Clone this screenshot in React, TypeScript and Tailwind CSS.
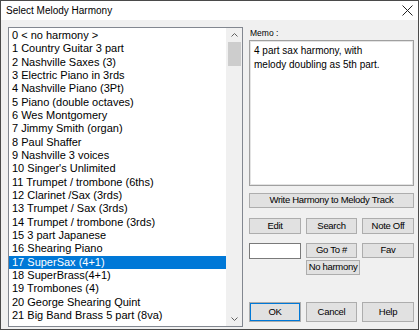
import React from "react";

const items = [
  "0 < no harmony >",
  "1 Country Guitar 3 part",
  "2 Nashville Saxes (3)",
  "3 Electric Piano in 3rds",
  "4 Nashville Piano (3Pt)",
  "5 Piano (double octaves)",
  "6 Wes Montgomery",
  "7 Jimmy Smith (organ)",
  "8 Paul Shaffer",
  "9 Nashville 3 voices",
  "10 Singer's Unlimited",
  "11 Trumpet / trombone (6ths)",
  "12 Clarinet /Sax (3rds)",
  "13 Trumpet / Sax (3rds)",
  "14 Trumpet / trombone (3rds)",
  "15 3 part Japanese",
  "16 Shearing Piano",
  "17 SuperSax (4+1)",
  "18 SuperBrass(4+1)",
  "19 Trombones (4)",
  "20 George Shearing Quint",
  "21 Big Band Brass 5 part (8va)",
];

const selected = 17;

function Btn({ children, className = "" }: { children: React.ReactNode; className?: string }) {
  return (
    <div
      className={`flex items-center justify-center bg-[#e1e1e1] border border-[#adadad] text-[9.5px] tracking-[-0.3px] text-black ${className}`}
    >
      {children}
    </div>
  );
}

export default function App() {
  return (
    <div
      className="w-[419px] h-[330px] flex flex-col border border-[#4a4a4a] bg-[#f0f0f0] overflow-hidden"
      style={{ fontFamily: '"Liberation Sans", Arial, sans-serif' }}
    >
      {/* title bar */}
      <div className="h-[19px] shrink-0 bg-white flex items-center justify-between pl-[5px] pr-[4px]">
        <span className="text-[10px] text-black">Select Melody Harmony</span>
        <svg width="11" height="11" viewBox="0 0 11 11" className="mr-[1px]">
          <path d="M0.5 0.5L10.5 10.5M10.5 0.5L0.5 10.5" stroke="#222" strokeWidth="1" fill="none" />
        </svg>
      </div>

      {/* body */}
      <div className="flex flex-1 pl-[7px] pt-[7px] pb-[2px] gap-[6px]">
        {/* list */}
        <div className="w-[235px] h-[300px] border border-[#828790] bg-white flex">
          <div className="flex-1 pt-[1px] overflow-hidden">
            {items.map((t, i) => (
              <div
                key={t}
                className={`h-[13.33px] leading-[13.33px] pl-[3px] text-[11px] whitespace-nowrap ${
                  i === selected ? "bg-[#0078d7] text-white" : "text-black"
                }`}
              >
                {t}
              </div>
            ))}
          </div>
          {/* scrollbar */}
          <div className="w-[16px] bg-[#f0f0f0] flex flex-col items-center">
            <div className="h-[13px] w-full flex items-center justify-center">
              <svg width="7" height="4" viewBox="0 0 7 4">
                <path d="M0.5 3.5L3.5 0.5L6.5 3.5" stroke="#606060" fill="none" />
              </svg>
            </div>
            <div className="mt-[1px] w-[13px] h-[24px] bg-[#cdcdcd]" />
            <div className="flex-1" />
            <div className="h-[15px] w-full flex items-center justify-center">
              <svg width="7" height="4" viewBox="0 0 7 4">
                <path d="M0.5 0.5L3.5 3.5L6.5 0.5" stroke="#606060" fill="none" />
              </svg>
            </div>
          </div>
        </div>

        {/* right column */}
        <div className="w-[165px] flex flex-col">
          <div className="h-[12px] text-[8.5px] leading-[12px] text-black pl-[1px]">Memo :</div>
          <div className="mt-[1px] h-[146px] border border-[#a0a0a0] bg-white shadow-[inset_0_0_0_1px_#e3e3e3] px-[4px] py-[3px] text-[10px] leading-[13.5px] text-black">
            4 part sax harmony, with
            <br />
            melody doubling as 5th part.
          </div>

          <Btn className="mt-[7px] h-[15px]">Write Harmony to Melody Track</Btn>

          <div className="mt-[10px] flex gap-[5px]">
            <Btn className="w-[52px] h-[16px]">Edit</Btn>
            <Btn className="w-[51px] h-[16px]">Search</Btn>
            <Btn className="w-[52px] h-[16px]">Note Off</Btn>
          </div>

          <div className="mt-[9px] flex gap-[5px]">
            <div className="w-[52px] h-[16px] bg-white border border-[#7a7a7a]" />
            <div className="flex flex-col gap-[2px]">
              <Btn className="w-[51px] h-[15px]">Go To #</Btn>
              <Btn className="w-[54px] h-[15px]">No harmony</Btn>
            </div>
            <Btn className="w-[52px] h-[15px] -ml-[3px]">Fav</Btn>
          </div>

          <div className="mt-[27px] flex gap-[5px]">
            <Btn className="w-[52px] h-[20px] border-[#0078d7] shadow-[inset_0_0_0_1px_#0078d7]">OK</Btn>
            <Btn className="w-[51px] h-[20px]">Cancel</Btn>
            <Btn className="w-[52px] h-[20px]">Help</Btn>
          </div>
        </div>
      </div>
    </div>
  );
}
